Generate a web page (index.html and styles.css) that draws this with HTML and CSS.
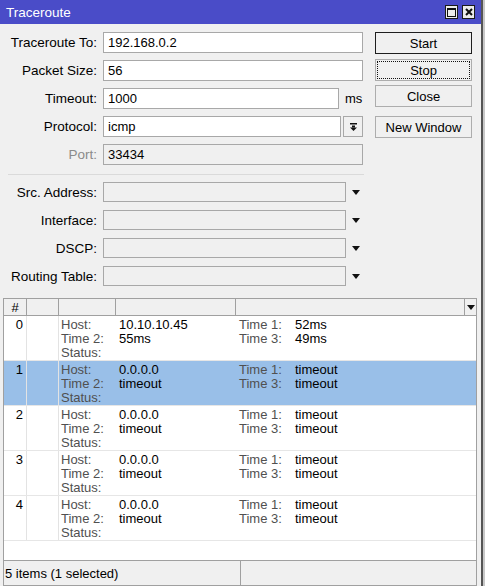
FILE: index.html
```html
<!DOCTYPE html>
<html>
<head>
<meta charset="utf-8">
<link rel="stylesheet" href="styles.css">
</head>
<body>
<div class="window">
  <div class="titlebar">
    <span class="title">Traceroute</span>
    <span class="tb-btn"><svg width="9" height="9" viewBox="0 0 9 9"><rect x="0.5" y="0.5" width="8" height="8" fill="none" stroke="#111" stroke-width="1"/><rect x="0" y="0" width="9" height="2" fill="#111"/></svg></span>
    <span class="tb-btn"><svg width="8" height="8" viewBox="0 0 8 8"><path d="M1 1 L7 7 M7 1 L1 7" stroke="#111" stroke-width="2"/></svg></span>
  </div>
  <div class="content">
    <div class="top">
      <div class="form">
        <div class="row"><span class="lbl">Traceroute To:</span><span class="inp w-full">192.168.0.2</span></div>
        <div class="row"><span class="lbl">Packet Size:</span><span class="inp w-full">56</span></div>
        <div class="row"><span class="lbl">Timeout:</span><span class="inp w-timeout">1000</span><span class="unit">ms</span></div>
        <div class="row"><span class="lbl">Protocol:</span><span class="inp w-proto">icmp</span><span class="dd-btn"><svg width="7" height="8" viewBox="0 0 7 8"><rect x="0" y="0" width="7" height="1.5" fill="#111"/><rect x="2" y="2.5" width="3" height="2" fill="#111"/><polygon points="0,4.5 7,4.5 3.5,8" fill="#111"/></svg></span></div>
        <div class="row"><span class="lbl dim">Port:</span><span class="inp w-full dis">33434</span></div>
        <div class="sep"></div>
        <div class="row r2"><span class="lbl">Src. Address:</span><span class="inp w-sel dis"></span><span class="arrow"><svg width="8" height="5" viewBox="0 0 8 5"><polygon points="0,0 8,0 4,5" fill="#111"/></svg></span></div>
        <div class="row r2"><span class="lbl">Interface:</span><span class="inp w-sel dis"></span><span class="arrow"><svg width="8" height="5" viewBox="0 0 8 5"><polygon points="0,0 8,0 4,5" fill="#111"/></svg></span></div>
        <div class="row r2"><span class="lbl">DSCP:</span><span class="inp w-sel dis"></span><span class="arrow"><svg width="8" height="5" viewBox="0 0 8 5"><polygon points="0,0 8,0 4,5" fill="#111"/></svg></span></div>
        <div class="row r2"><span class="lbl">Routing Table:</span><span class="inp w-sel dis"></span><span class="arrow"><svg width="8" height="5" viewBox="0 0 8 5"><polygon points="0,0 8,0 4,5" fill="#111"/></svg></span></div>
      </div>
      <div class="buttons">
        <span class="btn default">Start</span>
        <span class="btn focus b-stop">Stop</span>
        <span class="btn b-close">Close</span>
        <span class="btn b-new">New Window</span>
      </div>
    </div>
    <div class="table">
      <div class="thead">
        <span class="th th-num">#</span>
        <span class="th"></span>
        <span class="th"></span>
        <span class="th"></span>
        <span class="th"></span>
        <span class="th th-last"><svg width="8" height="5" viewBox="0 0 8 5"><polygon points="0,0 8,0 4,5" fill="#111"/></svg></span>
      </div>
      <div class="tr">
        <span class="td num">0</span><span class="td c2"></span>
        <span class="td lbls"><span>Host:</span><span>Time 2:</span><span>Status:</span></span>
        <span class="td vals"><span>10.10.10.45</span><span>55ms</span><span></span></span>
        <span class="td times"><span class="tl">Time 1:</span><span>52ms</span><span class="tl">Time 3:</span><span>49ms</span></span>
      </div>
      <div class="tr sel">
        <span class="td num">1</span><span class="td c2"></span>
        <span class="td lbls"><span>Host:</span><span>Time 2:</span><span>Status:</span></span>
        <span class="td vals"><span>0.0.0.0</span><span>timeout</span><span></span></span>
        <span class="td times"><span class="tl">Time 1:</span><span>timeout</span><span class="tl">Time 3:</span><span>timeout</span></span>
      </div>
      <div class="tr">
        <span class="td num">2</span><span class="td c2"></span>
        <span class="td lbls"><span>Host:</span><span>Time 2:</span><span>Status:</span></span>
        <span class="td vals"><span>0.0.0.0</span><span>timeout</span><span></span></span>
        <span class="td times"><span class="tl">Time 1:</span><span>timeout</span><span class="tl">Time 3:</span><span>timeout</span></span>
      </div>
      <div class="tr">
        <span class="td num">3</span><span class="td c2"></span>
        <span class="td lbls"><span>Host:</span><span>Time 2:</span><span>Status:</span></span>
        <span class="td vals"><span>0.0.0.0</span><span>timeout</span><span></span></span>
        <span class="td times"><span class="tl">Time 1:</span><span>timeout</span><span class="tl">Time 3:</span><span>timeout</span></span>
      </div>
      <div class="tr">
        <span class="td num">4</span><span class="td c2"></span>
        <span class="td lbls"><span>Host:</span><span>Time 2:</span><span>Status:</span></span>
        <span class="td vals"><span>0.0.0.0</span><span>timeout</span><span></span></span>
        <span class="td times"><span class="tl">Time 1:</span><span>timeout</span><span class="tl">Time 3:</span><span>timeout</span></span>
      </div>
    </div>
    <div class="status">
      <span class="s-cell s-left">5 items (1 selected)</span>
      <span class="s-cell s-right"></span>
    </div>
  </div>
</div>
</body>
</html>
```
FILE: styles.css
```css
html, body {
  margin: 0;
  padding: 0;
}
body {
  background: #c8c8c8;
  font-family: "Liberation Sans", Arial, sans-serif;
  font-size: 13px;
  color: #000;
}
.window {
  width: 483px;
  height: 586px;
  background: #f0f0f0;
  border-right: 2px solid #555;
  box-sizing: border-box;
  display: flex;
  flex-direction: column;
}
.titlebar {
  height: 24px;
  flex: none;
  background: #4a4cc8;
  color: #fff;
  display: flex;
  align-items: center;
  padding: 0 6px 0 6px;
  font-size: 13.5px;
}
.title {
  flex: 1;
}
.tb-btn {
  width: 13px;
  height: 14px;
  box-sizing: border-box;
  border: 1px solid #1a1a1a;
  background: #ececec;
  margin-left: 4px;
  display: flex;
  align-items: center;
  justify-content: center;
}
.content {
  flex: 1;
  display: flex;
  flex-direction: column;
  padding-top: 8px;
}
.top {
  display: flex;
  flex: none;
}
.form {
  width: 363px;
  display: flex;
  flex-direction: column;
}
.row {
  display: flex;
  align-items: center;
  height: 21px;
  margin-bottom: 7px;
}
.row.r2 {
  height: 20px;
  margin-bottom: 8px;
}
.lbl {
  width: 97px;
  margin-right: 6px;
  text-align: right;
  white-space: nowrap;
  font-size: 13.5px;
}
.lbl.dim {
  color: #8a8a8a;
}
.inp {
  height: 100%;
  box-sizing: border-box;
  border: 1px solid #a8a8a8;
  background: #fff;
  padding: 0 4px;
  display: flex;
  align-items: center;
}
.inp.dis {
  background: #f0f0f0;
}
.w-full { width: 260px; }
.w-timeout { width: 236px; }
.w-proto { width: 238px; }
.w-sel { width: 243px; }
.unit {
  margin-left: 6px;
}
.dd-btn {
  width: 20px;
  height: 21px;
  box-sizing: border-box;
  margin-left: 2px;
  border: 1px solid #a8a8a8;
  background: #f0f0f0;
  display: flex;
  align-items: center;
  justify-content: center;
}
.arrow {
  margin-left: 6px;
  display: flex;
  align-items: center;
}
.sep {
  height: 1px;
  width: 356px;
  margin: 2px 0 7px 8px;
  background: #dadada;
}
.buttons {
  width: 97px;
  margin-left: 12px;
  display: flex;
  flex-direction: column;
}
.btn {
  height: 22px;
  box-sizing: border-box;
  border: 1px solid #adadad;
  background: #f0f0f0;
  display: flex;
  align-items: center;
  justify-content: center;
}
.btn.default {
  border-color: #1e1e1e;
}
.btn.focus {
  outline: 1px dotted #111;
  outline-offset: -3px;
}
.b-stop { margin-top: 5px; }
.b-close { margin-top: 4px; }
.b-new { margin-top: 9px; }
.table {
  flex: 1;
  margin: 4px 0 0 3px;
  width: 474px;
  box-sizing: border-box;
  background: #fff;
  border: 1px solid #a0a0a0;
  border-bottom: none;
}
.thead {
  display: grid;
  grid-template-columns: 23px 32px 57px 120px 229px 1fr;
  height: 17px;
  box-sizing: border-box;
  background: #f0f0f0;
  border-bottom: 1px solid #a0a0a0;
}
.th {
  border-right: 1px solid #a0a0a0;
  display: flex;
  align-items: center;
  justify-content: center;
}
.th-last {
  border-right: none;
}
.tr {
  display: grid;
  grid-template-columns: 23px 32px 57px 120px 1fr;
  height: 45px;
  box-sizing: border-box;
  border-bottom: 1px solid #e6e6e6;
  line-height: 14px;
}
.tr.sel {
  background: #99bfe8;
}
.td {
  padding-top: 2px;
}
.num {
  text-align: right;
  padding-right: 3px;
  border-right: 1px solid #e3e3e3;
}
.c2 {
  border-right: 1px solid #e3e3e3;
}
.lbls, .vals {
  display: flex;
  flex-direction: column;
  padding-left: 2px;
}
.vals {
  padding-left: 3px;
}
.lbls span, .tl {
  color: #505050;
}
.vals span {
  height: 14px;
}
.times {
  display: grid;
  grid-template-columns: 56px 1fr;
  grid-auto-rows: 14px;
  padding-left: 3px;
}
.status {
  height: 26px;
  flex: none;
  margin-left: 3px;
  width: 474px;
  box-sizing: border-box;
  border: 1px solid #a0a0a0;
  display: flex;
}
.s-cell {
  display: flex;
  align-items: center;
}
.s-left {
  width: 235px;
  padding-left: 1px;
  border-right: 1px solid #a0a0a0;
}
.s-right {
  flex: 1;
}
```
